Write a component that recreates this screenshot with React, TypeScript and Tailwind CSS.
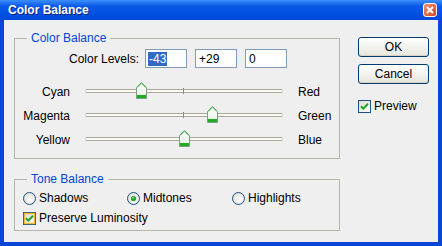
import React from "react"

const sliders = [
  { left: "Cyan", right: "Red", value: -43 },
  { left: "Magenta", right: "Green", value: 29 },
  { left: "Yellow", right: "Blue", value: 0 },
]

function Thumb() {
  return (
    <svg width="11" height="17" viewBox="0 0 11 17">
      <defs>
        <linearGradient id="thumbFill" x1="0" y1="0" x2="0" y2="1">
          <stop offset="0" stopColor="#ffffff" />
          <stop offset="1" stopColor="#e4efe4" />
        </linearGradient>
      </defs>
      <path d="M5.5 0.5 L10.5 5.5 L10.5 16.5 L0.5 16.5 L0.5 5.5 Z" fill="url(#thumbFill)" stroke="#7c9c8c" />
      <path d="M5.5 1.2 L9.8 5.5 M5.5 1.2 L1.2 5.5" stroke="#3fbf3f" />
      <rect x="1" y="13" width="9" height="3" fill="#1fae1f" />
    </svg>
  )
}

function Slider({ left, right, value }: { left: string; right: string; value: number }) {
  const pos = ((value + 100) / 200) * 198
  return (
    <div className="flex items-center h-[24px]">
      <div className="w-[55px] text-right">{left}</div>
      <div className="relative ml-[15px] w-[198px] h-[4px] -mt-[2px] rounded-full border-y border-[#a8a89c] bg-[#fbfbf4]">
        <div className="absolute left-[98px] -top-[2px] w-[1px] h-[6px] bg-[#8c8c80]" />
        <div className="absolute -top-[8px]" style={{ left: pos - 5.5 }}>
          <Thumb />
        </div>
      </div>
      <div className="ml-[15px]">{right}</div>
    </div>
  )
}

function Radio({ checked }: { checked?: boolean }) {
  return (
    <svg width="13" height="13" viewBox="0 0 13 13">
      <defs>
        <radialGradient id="radioFill" cx="0.6" cy="0.6" r="0.7">
          <stop offset="0" stopColor="#ffffff" />
          <stop offset="1" stopColor="#dcdcd4" />
        </radialGradient>
      </defs>
      <circle cx="6.5" cy="6.5" r="6" fill="url(#radioFill)" stroke="#1c5180" />
      {checked && <circle cx="6.5" cy="6.5" r="2.6" fill="#21a121" />}
      {checked && <circle cx="6" cy="6" r="1" fill="#7ce07c" />}
    </svg>
  )
}

function Check({ hot }: { hot?: boolean }) {
  return (
    <svg width="13" height="13" viewBox="0 0 13 13">
      <defs>
        <linearGradient id="checkFill" x1="0" y1="0" x2="1" y2="1">
          <stop offset="0" stopColor="#dcdcd4" />
          <stop offset="1" stopColor="#ffffff" />
        </linearGradient>
      </defs>
      <rect x="0.5" y="0.5" width="12" height="12" fill="url(#checkFill)" stroke="#1c5180" />
      {hot && <rect x="1.5" y="1.5" width="10" height="10" fill="none" stroke="#f8b636" strokeWidth="1.4" />}
      <path d="M3 6.2 L5.3 8.6 L10 3.8" fill="none" stroke="#21a121" strokeWidth="2" />
    </svg>
  )
}

function Button({ children }: { children: React.ReactNode }) {
  return (
    <div className="w-[71px] h-[20px] flex items-center justify-center rounded-[3px] border border-[#003c74] bg-linear-to-b from-white to-[#e6e6de] shadow-[inset_0_-1px_0_#d6d0c5]">
      {children}
    </div>
  )
}

export default function App() {
  return (
    <div className="w-[442px] h-[246px] flex flex-col bg-[#0a45d8] text-[12px] text-black font-['Liberation_Sans',Arial,sans-serif] leading-[14px] overflow-hidden">
      {/* Title bar */}
      <div className="h-[20px] flex items-center justify-between pl-[8px] pr-[5px] bg-linear-to-b from-[#3c8ffb] via-[#0a5ae8] via-30% to-[#0048dc]">
        <span className="font-bold text-white [text-shadow:1px_1px_0_#0b1f86]">Color Balance</span>
        <div className="w-[14px] h-[14px] flex items-center justify-center rounded-[3px] border border-white bg-linear-to-br from-[#f09070] to-[#d24418]">
          <svg width="8" height="8" viewBox="0 0 8 8">
            <path d="M1 1 L7 7 M7 1 L1 7" stroke="white" strokeWidth="2" />
          </svg>
        </div>
      </div>

      {/* Body */}
      <div className="flex-1 mx-[4px] mb-[4px] flex bg-[#efefef]">
        <div className="ml-[10px] w-[326px] flex flex-col">
          <fieldset className="mt-[11px] border border-[#b8b6a9] pb-[6px]">
            <legend className="ml-[12px] px-[4px] text-[#0046d5]">Color Balance</legend>
            <div className="mt-[4px] flex items-center">
              <div className="w-[124px] text-right">Color Levels:</div>
              <div className="ml-[6px] flex gap-[8px]">
                <div className="w-[42px] h-[19px] flex items-center pl-[2px] border border-[#7f9db9] bg-white">
                  <span className="bg-[#316ac5] text-white px-[1px]">-43</span>
                </div>
                <div className="w-[42px] h-[19px] flex items-center pl-[3px] border border-[#7f9db9] bg-white">+29</div>
                <div className="w-[42px] h-[19px] flex items-center pl-[3px] border border-[#7f9db9] bg-white">0</div>
              </div>
            </div>
            <div className="mt-[12px] flex flex-col">
              {sliders.map((s) => (
                <Slider key={s.left} left={s.left} right={s.right} value={s.value} />
              ))}
            </div>
          </fieldset>

          <fieldset className="mt-[13px] border border-[#b8b6a9] pb-[4px]">
            <legend className="ml-[12px] px-[4px] text-[#0046d5]">Tone Balance</legend>
            <div className="mt-[4px] h-[16px] flex items-center pl-[8px]">
              <div className="w-[104px] flex items-center gap-[3px]">
                <Radio />
                <span>Shadows</span>
              </div>
              <div className="w-[105px] flex items-center gap-[3px]">
                <Radio checked />
                <span>Midtones</span>
              </div>
              <div className="flex items-center gap-[3px]">
                <Radio />
                <span>Highlights</span>
              </div>
            </div>
            <div className="mt-[4px] h-[16px] flex items-center gap-[3px] pl-[8px]">
              <Check hot />
              <span>Preserve Luminosity</span>
            </div>
          </fieldset>
        </div>

        <div className="ml-[18px] mt-[17px] flex flex-col">
          <Button>OK</Button>
          <div className="mt-[7px]">
            <Button>Cancel</Button>
          </div>
          <div className="mt-[15px] flex items-center gap-[3px]">
            <Check />
            <span>Preview</span>
          </div>
        </div>
      </div>
    </div>
  )
}
